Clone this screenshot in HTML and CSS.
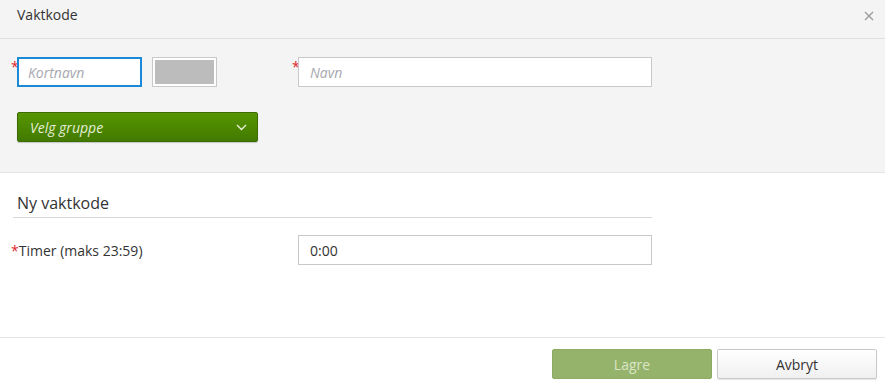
FILE: index.html
```html
<!DOCTYPE html>
<html lang="no">
<head>
    <meta charset="UTF-8">
    <meta name="viewport" content="width=device-width, initial-scale=1.0">
    <title>Vaktkode</title>
    <link rel="stylesheet" href="styles.css">
</head>
<body>

<div class="dialog">
    <div class="dialog-header">
        <span class="dialog-title">Vaktkode</span>
        <svg class="close" width="10" height="10" viewBox="0 0 10 10"><path d="M1 1 L9 9 M9 1 L1 9" stroke="#9a9a9a" stroke-width="1.3"/></svg>
    </div>

    <div class="top-panel">
        <div class="field-row">
            <div class="field">
                <span class="req">*</span>
                <input type="text" class="input short focused" placeholder="Kortnavn">
                <div class="swatch"><div class="swatch-color"></div></div>
            </div>
            <div class="field name-field">
                <span class="req">*</span>
                <input type="text" class="input name" placeholder="Navn">
            </div>
        </div>
        <button class="group-btn">
            <span>Velg gruppe</span>
            <svg width="11" height="7" viewBox="0 0 11 7"><path d="M1 1 L5.5 5.5 L10 1" fill="none" stroke="#e8f0dc" stroke-width="1.4"/></svg>
        </button>
    </div>

    <div class="content">
        <h2 class="section-title">Ny vaktkode</h2>
        <div class="form-row">
            <label class="row-label"><span class="req-inline">*</span>Timer (maks 23:59)</label>
            <input type="text" class="input name" value="0:00">
        </div>
    </div>

    <div class="footer">
        <button class="btn btn-save">Lagre</button>
        <button class="btn btn-cancel">Avbryt</button>
    </div>
</div>

</body>
</html>
```

FILE: styles.css
```css
body {
    font-family: "Open Sans", Arial, sans-serif;
    margin: 0;
    background-color: #fff;
    color: #333;
}

.dialog {
    width: 885px;
    height: 387px;
    overflow: hidden;
}

.dialog-header {
    height: 38px;
    background-color: #f4f4f4;
    border-bottom: 1px solid #e0e0e0;
    display: flex;
    align-items: center;
    justify-content: space-between;
    padding: 0 11px 0 17px;
}

.dialog-title {
    font-size: 14px;
    color: #333;
    margin-top: -9px;
}

.close {
    margin-top: -6px;
}

.top-panel {
    background-color: #f4f4f4;
    border-bottom: 1px solid #e4e4e4;
    height: 134px;
    box-sizing: border-box;
    padding: 18px 0 0 11px;
}

.field-row {
    display: flex;
    align-items: flex-start;
}

.field {
    display: flex;
    align-items: flex-start;
}

.name-field {
    margin-left: 75px;
}

.req {
    color: #e0262c;
    font-size: 14px;
    width: 6px;
    line-height: 14px;
    margin-top: 3px;
}

.input {
    font-family: "Open Sans", Arial, sans-serif;
    font-size: 14px;
    height: 30px;
    box-sizing: border-box;
    border: 1px solid #c8c8c8;
    background-color: #fff;
    padding: 0 11px;
    color: #333;
    outline: none;
}

.input::placeholder {
    color: #a8a8b0;
    font-style: italic;
}

.short {
    width: 125px;
    padding-left: 9px;
}

.focused {
    border: 2px solid #1a8ad8;
}

.name {
    width: 354px;
}

.swatch {
    width: 65px;
    height: 30px;
    box-sizing: border-box;
    border: 1px solid #c8c8c8;
    background-color: #fff;
    padding: 2px;
    margin-left: 10px;
}

.swatch-color {
    width: 100%;
    height: 100%;
    background-color: #bcbcbc;
}

.group-btn {
    margin: 25px 0 0 6px;
    width: 241px;
    height: 30px;
    border: 1px solid #3a6c00;
    border-radius: 2px;
    background: linear-gradient(#569600, #427a00);
    display: flex;
    align-items: center;
    justify-content: space-between;
    padding: 0 10px 0 12px;
    font-family: "Open Sans", Arial, sans-serif;
    font-style: italic;
    font-size: 14px;
    color: #e4eed6;
    box-shadow: 0 1px 1px rgba(0, 0, 0, 0.2);
}

.content {
    height: 165px;
    box-sizing: border-box;
    padding: 19px 0 0 0;
    border-bottom: 1px solid #e4e4e4;
}

.section-title {
    font-weight: normal;
    font-size: 16px;
    margin: 0 0 0 13px;
    padding: 0 0 3px 4px;
    width: 635px;
    border-bottom: 1px solid #d8d8d8;
    color: #333;
}

.form-row {
    display: flex;
    align-items: center;
    margin-top: 17px;
    padding-left: 11px;
}

.row-label {
    font-size: 14px;
    width: 287px;
    color: #333;
}

.req-inline {
    color: #e0262c;
}

.footer {
    display: flex;
    justify-content: flex-end;
    gap: 5px;
    padding: 11px 8px 0 0;
}

.btn {
    width: 160px;
    height: 30px;
    font-family: "Open Sans", Arial, sans-serif;
    font-size: 14px;
    border-radius: 2px;
}

.btn-save {
    background-color: #96b36b;
    border: 1px solid #8eab63;
    color: #d9e6c6;
}

.btn-cancel {
    background: linear-gradient(#ffffff, #f0f0f0);
    border: 1px solid #c8c8c8;
    color: #333;
    box-shadow: 0 1px 1px rgba(0, 0, 0, 0.1);
}
```
